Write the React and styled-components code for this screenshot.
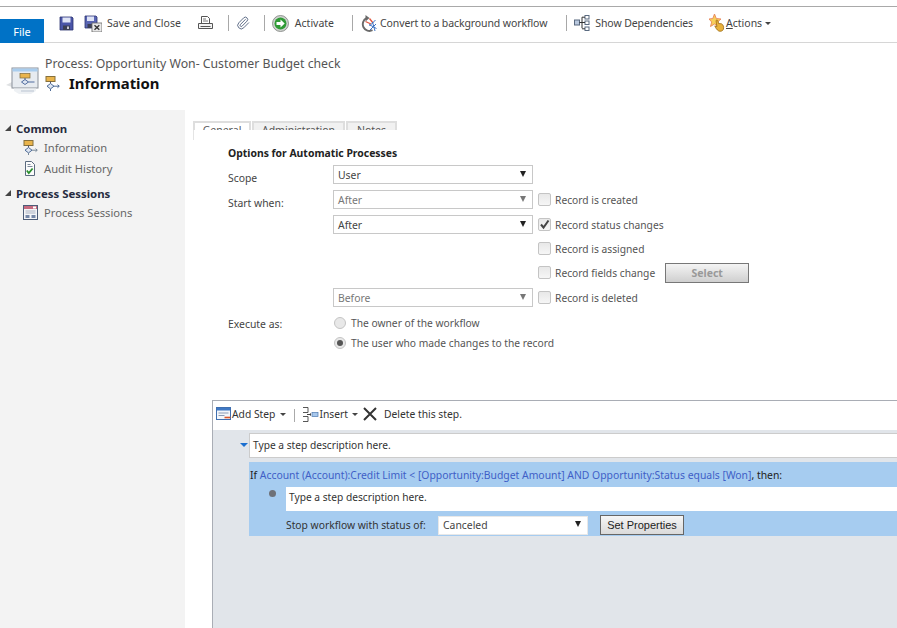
import React from 'react';
import styled, { createGlobalStyle } from 'styled-components';
import { Paperclip } from 'lucide-react';

const Global = createGlobalStyle`
   html, body { margin: 0; padding: 0; background: #fff; }
   body { font-family: "Noto Sans", "Open Sans", sans-serif; font-size: 11px; color: #444; }
`;

const Page = styled.div`
   width: 897px;
   height: 628px;
   overflow: hidden;
   display: flex;
   flex-direction: column;
   background: #fff;
`;

const TopStrip = styled.div`
   height: 6px;
   border-bottom: 1px solid #a9a9a9;
   flex: none;
`;

const Ribbon = styled.div`
   height: 35px;
   flex: none;
   display: flex;
   border-bottom: 1px solid #d6d6d6;
`;

const FileTab = styled.div`
   width: 44px;
   height: 24px;
   margin-top: 12px;
   background: #0072c6;
   color: #fff;
   display: flex;
   align-items: center;
   justify-content: center;
   font-size: 11px;
`;

const Tools = styled.div`
   display: flex;
   align-items: center;
   height: 32px;
   padding-left: 15px;
   white-space: nowrap;
`;

const Tool = styled.div`
   display: flex;
   align-items: center;
   gap: ${p => p.$gap ?? 6}px;
   margin-right: ${p => p.$after ?? 0}px;
   color: #444;
   font-size: 10.5px;
   letter-spacing: ${p => p.$spacing ?? 0}px;
`;

const Divider = styled.div`
   width: 1px;
   height: 16px;
   background: #a8a8a8;
   margin-right: ${p => p.$after}px;
`;

const Caret = styled.span`
   width: 0;
   height: 0;
   border-left: 3px solid transparent;
   border-right: 3px solid transparent;
   border-top: 3px solid #444;
   margin-left: ${p => p.$left ?? 4}px;
`;

const Header = styled.div`
   height: 67px;
   flex: none;
   display: flex;
   padding: 12px 0 0 6px;
   box-sizing: border-box;
`;

const HeaderIcon = styled.div`
   width: 39px;
   padding-top: 7px;
`;

const TitleBlock = styled.div`
   display: flex;
   flex-direction: column;
`;

const Breadcrumb = styled.div`
   font-size: 12.28px;
   line-height: 17px;
   color: #555;
`;

const TitleRow = styled.div`
   display: flex;
   align-items: center;
   gap: 9px;
`;

const Title = styled.h1`
   margin: 0;
   font-size: 14.9px;
   line-height: 22px;
   font-weight: 700;
   color: #111;
`;

const Body = styled.div`
   flex: 1;
   display: flex;
   min-height: 0;
`;

const Sidebar = styled.nav`
   width: 185px;
   flex: none;
   background: #f3f3f3;
   padding-top: 10px;
   box-sizing: border-box;
`;

const Group = styled.div`
   display: flex;
   align-items: center;
   height: 16px;
   margin-top: ${p => p.$top ?? 0}px;
   margin-bottom: 1px;
   padding-left: 5px;
   gap: 5px;
   font-size: 11.4px;
   font-weight: 700;
   color: #262b40;
`;

const Triangle = styled.span`
   width: 0;
   height: 0;
   border-left: 6px solid transparent;
   border-bottom: 6px solid #444;
`;

const NavItem = styled.div`
   display: flex;
   align-items: center;
   height: 21px;
   padding-left: 23px;
   gap: 6px;
   font-size: 11.2px;
   color: #666;
`;

const Main = styled.main`
   flex: 1;
   min-width: 0;
   display: flex;
   flex-direction: column;
   padding-left: 8px;
`;

const TabStrip = styled.div`
   display: flex;
   height: 9px;
   margin-top: 11px;
   overflow: hidden;
   flex: none;
   gap: 1px;
`;

const Tab = styled.div`
   width: ${p => p.$width}px;
   height: 22px;
   box-sizing: border-box;
   border: 2px solid #dedede;
   border-bottom: none;
   background: ${p => (p.$active ? '#fff' : '#f1f1f1')};
   text-align: center;
   font-size: 10.5px;
   line-height: 15px;
   color: #555;
`;

const TabEdge = styled.div`
   width: 0;
   height: 10px;
   border-left: 1px solid #e4e4e4;
   flex: none;
`;

const Form = styled.section`
   margin-left: 35px;
   margin-top: 5px;
   flex: none;
`;

const FormTitle = styled.div`
   font-size: 10.4px;
   font-weight: 700;
   color: #222;
   line-height: 16px;
`;

const FormGrid = styled.div`
   display: grid;
   grid-template-columns: 105px 200px 1fr;
   margin-top: 4px;
`;

const Label = styled.div`
   grid-column: 1;
   height: ${p => p.$height}px;
   font-size: 10.4px;
   color: #444;
   padding-top: ${p => p.$pad ?? 6}px;
   box-sizing: border-box;
`;

const Select = styled.div`
   width: ${p => p.$width ?? 200}px;
   height: 19px;
   box-sizing: border-box;
   border: 1px solid ${p => p.$border ?? '#c8c8c8'};
   background: #fff;
   display: flex;
   align-items: center;
   justify-content: space-between;
   padding: 0 6px 0 4px;
   font-size: 10.4px;
   color: ${p => (p.$disabled ? '#777' : '#444')};
   flex: none;
`;

const Arrow = styled.span`
   width: 0;
   height: 0;
   border-left: 3.5px solid transparent;
   border-right: 3.5px solid transparent;
   border-top: 6px solid ${p => (p.$disabled ? '#777' : '#222')};
   margin-top: -2px;
`;

const Cell = styled.div`
   grid-column: ${p => p.$column};
   display: flex;
   align-items: center;
   align-self: start;
   height: ${p => p.$height ?? 19}px;
   margin-left: ${p => p.$left ?? 0}px;
`;

const Check = styled.span`
   width: 13px;
   height: 13px;
   box-sizing: border-box;
   border: 1px solid #c4c4c4;
   border-radius: 2px;
   background: linear-gradient(#e8e8e8, #f6f6f6);
   margin-right: 4px;
   display: flex;
   align-items: center;
   justify-content: center;
   flex: none;
`;

const OptionText = styled.span`
   font-size: 10.25px;
   color: #555;
   white-space: nowrap;
`;

const SelectButton = styled.div`
   width: 84px;
   height: 20px;
   box-sizing: border-box;
   border: 1px solid #777;
   background: linear-gradient(#f4f4f4, #cfcfcf);
   margin-left: 10px;
   display: flex;
   align-items: center;
   justify-content: center;
   font-size: 10.5px;
   font-weight: 700;
   color: #999;
`;

const Radio = styled.span`
   width: 12px;
   height: 12px;
   box-sizing: border-box;
   border-radius: 50%;
   border: 1px solid #c4c4c4;
   background: #e8e8e8;
   margin: 0 5px 0 1px;
   display: flex;
   align-items: center;
   justify-content: center;
   flex: none;
   &::after {
      content: '';
      width: 6px;
      height: 6px;
      border-radius: 50%;
      background: ${p => (p.$on ? '#555' : 'transparent')};
   }
`;

const Designer = styled.section`
   flex: 1;
   margin: 47px 0 0 19px;
   border-top: 1px solid #a9adb5;
   border-left: 1px solid #a9adb5;
   background: #e1e5ea;
   display: flex;
   flex-direction: column;
   min-height: 0;
`;

const DesignerBar = styled.div`
   height: 29px;
   flex: none;
   box-sizing: border-box;
   padding: 0 0 3px 3px;
   background: #fff;
   display: flex;
   align-items: center;
   white-space: nowrap;
`;

const BarItem = styled.div`
   display: flex;
   align-items: center;
   gap: ${p => p.$gap ?? 2}px;
   margin-right: ${p => p.$after ?? 0}px;
   font-size: 10.3px;
   color: #333;
`;

const BarDivider = styled.div`
   width: 1px;
   height: 13px;
   background: #aaa;
   margin: 3px 7px 0 8px;
`;

const StepArea = styled.div`
   padding: 3px 0 0 27px;
   display: flex;
   align-items: flex-start;
   gap: 1px;
`;

const Expand = styled.span`
   width: 0;
   height: 0;
   border-left: 4px solid transparent;
   border-right: 4px solid transparent;
   border-top: 4px solid #1b6fd0;
   margin-top: 10px;
   flex: none;
`;

const Description = styled.div`
   flex: 1;
   height: 25px;
   box-sizing: border-box;
   background: #fff;
   border: 1px solid #ccc;
   border-right: none;
   display: flex;
   align-items: center;
   padding: 0 0 2px 3px;
   font-size: 10.2px;
   color: #333;
`;

const Branch = styled.div`
   margin: 4px 0 0 36px;
   height: 74px;
   background: #a6ccf0;
   flex: none;
   display: flex;
   flex-direction: column;
`;

const Condition = styled.div`
   height: 25px;
   display: flex;
   align-items: center;
   padding-left: 1px;
   font-size: 10.38px;
   color: #222;
   white-space: nowrap;
`;

const Link = styled.span`
   color: #3f5fc7;
`;

const InnerRow = styled.div`
   display: flex;
   align-items: flex-start;
   padding-left: 20px;
`;

const Dot = styled.span`
   width: 7px;
   height: 7px;
   border-radius: 50%;
   background: #6e7178;
   margin: 3px 10px 0 0;
   flex: none;
`;

const InnerInput = styled.div`
   flex: 1;
   height: 24px;
   box-sizing: border-box;
   background: #fff;
   display: flex;
   align-items: center;
   padding: 0 0 4px 3px;
   font-size: 10.2px;
   color: #333;
`;

const StopRow = styled.div`
   display: flex;
   align-items: center;
   height: 20px;
   margin-top: 4px;
   padding-left: 37px;
   font-size: 10.3px;
   color: #333;
`;

const StopLabel = styled.span`
   width: 152px;
`;

const SetProperties = styled.div`
   width: 84px;
   height: 20px;
   box-sizing: border-box;
   border: 1px solid #666;
   background: linear-gradient(#f6f6f6, #dadada);
   margin-left: 12px;
   display: flex;
   align-items: center;
   justify-content: center;
   font-family: "Liberation Sans", sans-serif;
   font-size: 11px;
   color: #222;
`;

const Floppy = () => (
   <svg width="15" height="15" viewBox="0 0 15 15">
      <path d="M1 1h12l1 1v12H1z" fill="#4a55a8" stroke="#2b3270" strokeWidth="0.8" />
      <rect x="3.5" y="1.5" width="8" height="5" fill="#dfe4f6" />
      <rect x="4" y="9.5" width="7" height="4.5" fill="#3b3f55" />
      <rect x="8" y="10.5" width="2" height="2.5" fill="#c9c9d6" />
   </svg>
);

const SaveClose = () => (
   <svg width="18" height="17" viewBox="0 0 18 17">
      <path d="M1 1h11l1 1v11H1z" fill="#5a66b4" stroke="#2b3270" strokeWidth="0.8" />
      <rect x="3" y="1.5" width="7" height="4.5" fill="#dfe4f6" />
      <rect x="3.5" y="9" width="6" height="4" fill="#3b3f55" />
      <rect x="8" y="8" width="10" height="9" fill="#e8e8e8" stroke="#666" strokeWidth="0.8" />
      <path d="M10.5 10.2l4.8 4.6M15.3 10.2l-4.8 4.6" stroke="#333" strokeWidth="1.4" />
   </svg>
);

const Printer = () => (
   <svg width="15" height="14" viewBox="0 0 15 14" fill="none" stroke="#555">
      <path d="M3.5 7.5V.5h6l2 2v5" />
      <path d="M5 3h3M5 5h5" strokeWidth="0.8" />
      <path d="M.5 7.5h14v5H.5z" fill="#f4f4f4" />
      <path d="M2.5 10.5h10" />
   </svg>
);

const Activate = () => (
   <svg width="17" height="17" viewBox="0 0 17 17">
      <circle cx="8.5" cy="8.5" r="8" fill="#cfd3cf" stroke="#7b7f7b" strokeWidth="0.8" />
      <circle cx="8.5" cy="8.5" r="6" fill="#2f9a35" />
      <path d="M4.5 7h4V4.5l4.2 4-4.2 4V10h-4z" fill="#fff" />
   </svg>
);

const Convert = () => (
   <svg width="17" height="17" viewBox="0 0 17 17" fill="none">
      <path d="M6.5 3.2a6.300 6.300 0 1 0 6 12" stroke="#6a6a6a" strokeWidth="1.9" />
      <path d="M5.500 0v6.500L9.500 3z" fill="#6a6a6a" />
      <path d="M5.500 6.500l5.500 2.500M9.500 3.500l3.500 4.500" stroke="#e0563f" strokeWidth="1.3" />
      <path d="M9.500 11l6-6M10 15l6-6M12.500 7l2.500 9M9 9.500l7.500 4" stroke="#3c72c4" strokeWidth="1" />
   </svg>
);

const Dependencies = () => (
   <svg width="16" height="16" viewBox="0 0 16 16" fill="none" stroke="#5a6a80">
      <rect x="0.5" y="5" width="5" height="5" fill="#b9c8de" />
      <rect x="11" y="0.5" width="4" height="3.5" fill="#fff" />
      <rect x="11" y="6" width="4" height="3.5" fill="#fff" />
      <rect x="11" y="12" width="4" height="3.5" fill="#fff" />
      <path d="M5.5 7.5H11M8 2.2v11M8 2.2h3M8 13.8h3" stroke="#333" />
   </svg>
);

const ActionsIcon = () => (
   <svg width="17" height="18" viewBox="0 0 17 18">
      <path d="M5.500 0l1.800 4.500 4.700.5-3.500 3 1.200 4.500-4.200-2.500L1.500 12.500l1.200-4.500L0 5l3.800-.5z" fill="#f7cf5a" stroke="#e8845c" strokeWidth="0.9" />
      <path d="M7 6.500c.8-.8 1.800-.4 2 .6l.6 2.400 2.900.3c1.800.8 2.700 3.500 1.800 5.700-.6 1.500-3 2.300-4.700 1.400-1.800-1-3-3.200-3.800-5l2.100.8z" fill="#e8b23c" stroke="#9a6a14" strokeWidth="0.8" />
   </svg>
);

const Flow = ({ muted }) => (
   <svg width="15" height="15" viewBox="0 0 15 15" fill="none">
      <rect x="1" y="0.500" width="9" height="5" fill="#e9b44c" stroke="#86703c" />
      <path d="M5.500 5.500v2" stroke="#556" />
      <path d="M5.500 7.500l3.500 2.700-3.500 2.700L2 10.200z" fill="#dfe6f2" stroke="#4d6a96" />
      <path d="M9 10.200h5M12.500 8.700l1.800 1.500-1.800 1.500M5.500 13v2" stroke={muted ? '#789' : '#4d6a96'} />
   </svg>
);

const BigFlow = () => (
   <svg width="33" height="33" viewBox="0 0 33 33">
      <path d="M0 23l6-3v5z" fill="#dfe1e3" />
      <rect x="6" y="6" width="26" height="20" fill="#e7ebf0" stroke="#8a9099" />
      <rect x="6.500" y="6.500" width="25" height="3" fill="#a9cdee" />
      <rect x="14" y="11.500" width="10" height="4.500" fill="#e9b44c" stroke="#7f6a3a" strokeWidth="0.7" />
      <path d="M19 16v1.500" stroke="#556" />
      <path d="M19 17.500l3.500 2.500-3.500 2.500-3.500-2.500zM22.500 20h6" fill="#dfe6f2" stroke="#3f5f95" strokeWidth="0.9" />
      <path d="M8 26.500h22v2.500l-5 3h-12l-5-3z" fill="#eef1f4" />
      <path d="M15 29h13" stroke="#b9c3d1" />
   </svg>
);

const AuditIcon = () => (
   <svg width="15" height="15" viewBox="0 0 15 15" fill="none">
      <path d="M2.500.5h6l3 3v11h-9z" fill="#fbfbfb" stroke="#5b6a7e" />
      <path d="M4.500 3.500h3M4.500 5.500h5" stroke="#7d8a9b" />
      <path d="M3.800 9.500l2 2.500 3.800-4.500" stroke="#2b8f2e" strokeWidth="1.800" />
   </svg>
);

const SessionIcon = () => (
   <svg width="15" height="15" viewBox="0 0 15 15">
      <rect x="0.500" y="0.500" width="14" height="14" fill="#f4f5f8" stroke="#4c5c78" />
      <rect x="1" y="1" width="13" height="3" fill="#c66a7f" />
      <rect x="10" y="1.500" width="3" height="2" fill="#fff" />
      <path d="M2.500 6h10M2.500 8h10" stroke="#aab2c2" />
      <rect x="2.500" y="10" width="4" height="3" fill="#7688a8" />
      <rect x="8.500" y="10" width="4" height="3" fill="#7688a8" />
   </svg>
);

const AddStepIcon = () => (
   <svg width="15" height="14" viewBox="0 0 15 14">
      <rect x="0.500" y="0.500" width="14" height="12" fill="#f3f6fb" stroke="#3f6fb0" />
      <rect x="1" y="1" width="13" height="2.500" fill="#3f78c4" />
      <path d="M2.500 6h10M2.500 8.500h6" stroke="#8b9bb3" />
      <path d="M8.500 10.500h6" stroke="#d8562a" strokeWidth="1.600" />
   </svg>
);

const InsertIcon = () => (
   <svg width="17" height="15" viewBox="0 0 17 15" fill="none">
      <path d="M1 .5h5v5H1M1 9.500h5v5H1" stroke="#444" strokeWidth="0.900" />
      <path d="M5 7.500h4" stroke="#444" />
      <path d="M7 7.500l2-1.500v3z" fill="#444" />
      <rect x="10" y="5.500" width="6" height="4" fill="#a8c8ec" stroke="#4d78b0" strokeWidth="0.700" />
   </svg>
);

const DeleteIcon = () => (
   <svg width="14" height="14" viewBox="0 0 14 14">
      <path d="M1 1l12 12M13 1L1 13" stroke="#333" strokeWidth="2" />
   </svg>
);

const Tick = () => (
   <svg width="11" height="11" viewBox="0 0 11 11">
      <path d="M2 5.500l2.500 3L9.500 1.500" fill="none" stroke="#444" strokeWidth="2" />
   </svg>
);

const optionRows = [
   { key: 'scope', height: 25, label: 'Scope', select: 'User' },
   { key: 'created', height: 25, label: 'Start when:', select: 'After', disabled: true, option: 'Record is created' },
   { key: 'status', height: 24, select: 'After', option: 'Record status changes', checked: true },
   { key: 'assigned', height: 24, option: 'Record is assigned' },
   { key: 'fields', height: 25, option: 'Record fields change', button: true },
   { key: 'deleted', height: 25, select: 'Before', disabled: true, option: 'Record is deleted' },
];

const App = () => (
   <Page>
      <Global />
      <TopStrip />
      <Ribbon>
         <FileTab>File</FileTab>
         <Tools>
            <Tool $after={10}><Floppy /></Tool>
            <Tool $after={17} $gap={5}><SaveClose />Save and Close</Tool>
            <Tool $after={15}><Printer /></Tool>
            <Divider $after={7} />
            <Tool $after={14}><Paperclip size={14} color="#4a5a78" strokeWidth={1.5} /></Tool>
            <Divider $after={7} />
            <Tool $after={18}><Activate />Activate</Tool>
            <Divider $after={7} />
            <Tool $after={19} $gap={3} $spacing={-0.1}><Convert />Convert to a background workflow</Tool>
            <Divider $after={7} />
            <Tool $after={16} $gap={5} $spacing={-0.1}><Dependencies />Show Dependencies</Tool>
            <Tool $gap={0}><ActionsIcon /><span><u>A</u>ctions</span><Caret $left={3} /></Tool>
         </Tools>
      </Ribbon>
      <Header>
         <HeaderIcon><BigFlow /></HeaderIcon>
         <TitleBlock>
            <Breadcrumb>Process: Opportunity Won- Customer Budget check</Breadcrumb>
            <TitleRow><Flow /><Title>Information</Title></TitleRow>
         </TitleBlock>
      </Header>
      <Body>
         <Sidebar>
            <Group><Triangle />Common</Group>
            <NavItem><Flow muted />Information</NavItem>
            <NavItem><AuditIcon />Audit History</NavItem>
            <Group $top={6}><Triangle />Process Sessions</Group>
            <NavItem><SessionIcon />Process Sessions</NavItem>
         </Sidebar>
         <Main>
            <TabStrip>
               <Tab $width={58} $active>General</Tab>
               <Tab $width={93}>Administration</Tab>
               <Tab $width={51}>Notes</Tab>
            </TabStrip>
            <TabEdge />
            <Form>
               <FormTitle>Options for Automatic Processes</FormTitle>
               <FormGrid>
                  {optionRows.map(row => (
                     <React.Fragment key={row.key}>
                        <Label $height={row.height}>{row.label}</Label>
                        <div>
                           {row.select && (
                              <Select $disabled={row.disabled}>
                                 {row.select}
                                 <Arrow $disabled={row.disabled} />
                              </Select>
                           )}
                        </div>
                        {row.option && (
                           <Cell $column={3} $left={5}>
                              <Check>{row.checked && <Tick />}</Check>
                              <OptionText>{row.option}</OptionText>
                              {row.button && <SelectButton>Select</SelectButton>}
                           </Cell>
                        )}
                     </React.Fragment>
                  ))}
                  <Label $height={20} $pad={4}>Execute as:</Label>
                  <Cell $column="2 / 4" $height={20}>
                     <Radio />
                     <OptionText>The owner of the workflow</OptionText>
                  </Cell>
                  <Cell $column="2 / 4" $height={20}>
                     <Radio $on />
                     <OptionText>The user who made changes to the record</OptionText>
                  </Cell>
               </FormGrid>
            </Form>
            <Designer>
               <DesignerBar>
                  <BarItem $gap={1}><AddStepIcon />Add Step<Caret /></BarItem>
                  <BarDivider />
                  <BarItem $gap={0} $after={5}><InsertIcon />Insert<Caret /></BarItem>
                  <BarItem $gap={7}><DeleteIcon />Delete this step.</BarItem>
               </DesignerBar>
               <StepArea>
                  <Expand />
                  <Description>Type a step description here.</Description>
               </StepArea>
               <Branch>
                  <Condition>
                     If&nbsp;<Link>Account (Account):Credit Limit &lt; [Opportunity:Budget Amount] AND Opportunity:Status equals [Won]</Link>, then:
                  </Condition>
                  <InnerRow>
                     <Dot />
                     <InnerInput>Type a step description here.</InnerInput>
                  </InnerRow>
                  <StopRow>
                     <StopLabel>Stop workflow with status of:</StopLabel>
                     <Select $width={150} $border="#e8e8e8">
                        Canceled
                        <Arrow />
                     </Select>
                     <SetProperties>Set Properties</SetProperties>
                  </StopRow>
               </Branch>
            </Designer>
         </Main>
      </Body>
   </Page>
);

export default App;
